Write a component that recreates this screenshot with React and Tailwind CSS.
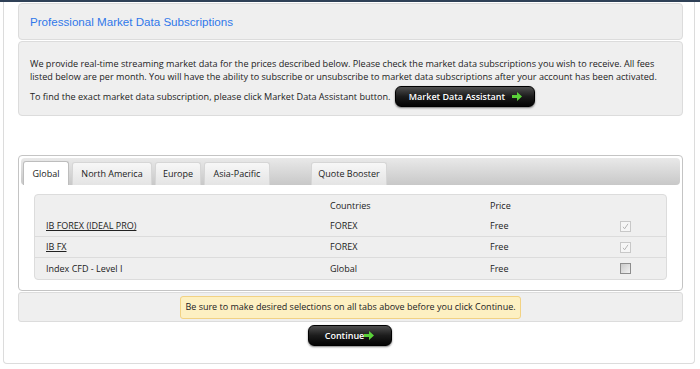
const Arrow = () => (
  <svg width="10" height="9" viewBox="0 0 10 9" className="inline-block">
    <path d="M0 3h5V0l5 4.5L5 9V6H0z" fill="#5bd13a" />
  </svg>
);

const BlackButton = ({ children, className = '' }) => (
  <button
    className={`flex items-center justify-center rounded-[6px] border border-black bg-gradient-to-b from-[#505050] via-[#1c1c1c] to-[#050505] text-[9px] font-semibold text-white shadow-[0_1px_2px_rgba(0,0,0,0.5)] ${className}`}
  >
    {children}
  </button>
);

const Check = ({ checked }) => (
  checked ? (
    <div className="flex h-[11px] w-[11px] items-center justify-center border border-[#c8c8c8] bg-[#f6f6f6]">
      <svg width="7" height="7" viewBox="0 0 7 7">
        <path d="M1 3.8l1.6 2L6 0.8" fill="none" stroke="#b5b5b5" strokeWidth="1" />
      </svg>
    </div>
  ) : (
    <div className="h-[11px] w-[11px] border border-[#8d8d8d] bg-gradient-to-br from-[#c9c9c9] to-[#f2f2f2]" />
  )
);

const tabs = [
  { label: 'Global', w: 'w-[46px]' },
  { label: 'North America', w: 'w-[80px]' },
  { label: 'Europe', w: 'w-[46px]' },
  { label: 'Asia-Pacific', w: 'w-[66px]' },
];

const rows = [
  { name: 'IB FOREX (IDEAL PRO)', link: true, country: 'FOREX', price: 'Free', checked: true },
  { name: 'IB FX', link: true, country: 'FOREX', price: 'Free', checked: true },
  { name: 'Index CFD - Level I', link: false, country: 'Global', price: 'Free', checked: false },
];

export default function App() {
  return (
    <div className="h-[369px] w-[700px] overflow-hidden bg-white text-[#222]" style={{ fontFamily: '"Open Sans", sans-serif' }}>
      <div className="h-[2px] bg-[#2f4157]" />
      <div className="ml-[3px] mr-[5px] h-[362px] rounded-b-[4px] border-x border-b border-[#dcdcdc] pl-[14px] pr-[11px] pt-[1px]">
        {/* header */}
        <div className="flex h-[37px] items-center rounded-[4px] border border-[#dcdcdc] bg-[#efefef] pl-[11px]">
          <h1 className="text-[11.6px] text-[#2f78ea]" style={{ fontFamily: '"Liberation Sans", Arial, sans-serif' }}>
            Professional Market Data Subscriptions
          </h1>
        </div>

        {/* description */}
        <div className="mt-px h-[75px] rounded-[4px] border border-[#dcdcdc] bg-[#efefef] pl-[11px] pr-[10px] pt-[15px] text-[9.1px] leading-[13px]">
          <p>
            We provide real-time streaming market data for the prices described below. Please check the market data subscriptions you wish to receive. All fees
            listed below are per month. You will have the ability to subscribe or unsubscribe to market data subscriptions after your account has been activated.
          </p>
          <div className="mt-[3px] flex items-center gap-[5px]">
            <span>To find the exact market data subscription, please click Market Data Assistant button.</span>
            <BlackButton className="h-[21px] w-[140px] gap-[7px]">
              Market Data Assistant <Arrow />
            </BlackButton>
          </div>
        </div>

        {/* tabs panel */}
        <div className="mt-[39px] h-[136px] rounded-[4px] border border-[#c4c4c4] p-[2px]">
          <div className="flex h-[27px] items-end gap-[3px] rounded-[4px] bg-gradient-to-b from-[#e9e9e9] to-[#c8c8c8] pl-[2px] text-[9px]">
            {tabs.map((t, i) => (
              <div
                key={t.label}
                className={`flex items-center justify-center rounded-t-[3px] border border-b-0 ${t.w} ${
                  i === 0 ? 'h-[24px] border-[#bdbdbd] bg-white' : 'h-[23px] border-[#d6d6d6] bg-gradient-to-b from-[#f7f7f7] to-[#e4e4e4]'
                }`}
              >
                {t.label}
              </div>
            ))}
            <div className="ml-[38px] flex h-[23px] w-[76px] items-center justify-center rounded-t-[3px] border border-b-0 border-[#d6d6d6] bg-gradient-to-b from-[#f7f7f7] to-[#e4e4e4]">
              Quote Booster
            </div>
          </div>

          <div className="mx-[13px] mt-[9px] rounded-[4px] border border-[#dcdcdc] bg-[#efefef] text-[9px]">
            <div className="grid h-[21px] grid-cols-[284px_160px_130px_1fr] items-center pl-[11px]">
              <span />
              <span>Countries</span>
              <span>Price</span>
              <span />
            </div>
            {rows.map((r, i) => (
              <div
                key={r.name}
                className={`grid h-[21px] grid-cols-[284px_160px_130px_1fr] items-center pl-[11px] ${i < rows.length - 1 ? 'border-b border-[#dcdcdc]' : ''}`}
              >
                <span className={r.link ? 'underline' : ''}>{r.name}</span>
                <span>{r.country}</span>
                <span>{r.price}</span>
                <Check checked={r.checked} />
              </div>
            ))}
          </div>
        </div>

        {/* notice */}
        <div className="mt-px flex h-[30px] items-center justify-center rounded-[3px] border border-[#dcdcdc] bg-[#efefef]">
          <div className="flex h-[23px] w-[341px] items-center justify-center rounded-[3px] border border-[#f2d283] bg-[#fdf0c2] text-[9px]">
            Be sure to make desired selections on all tabs above before you click Continue.
          </div>
        </div>

        <div className="mt-[3px] flex justify-center pr-[2px]">
          <BlackButton className="h-[21px] w-[84px]">
            Continue<Arrow />
          </BlackButton>
        </div>
      </div>
    </div>
  );
}
